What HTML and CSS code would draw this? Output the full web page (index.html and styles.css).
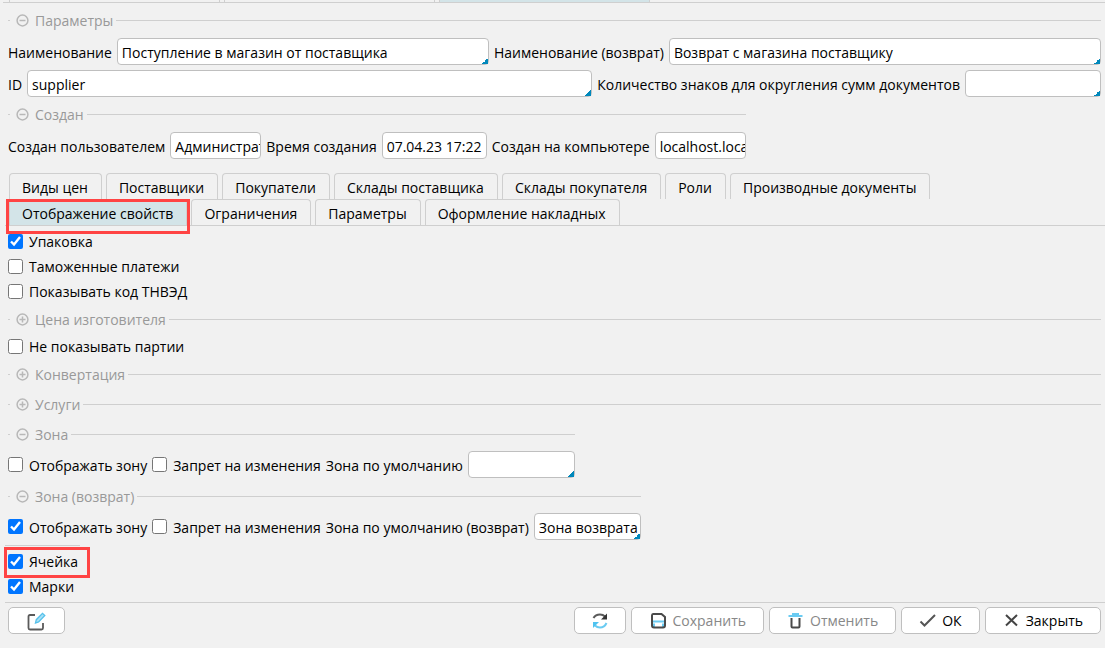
FILE: index.html
```html
<!DOCTYPE html>
<html lang="ru">
<head>
  <meta charset="UTF-8">
  <meta name="viewport" content="width=device-width, initial-scale=1">
  <title>Поступление в магазин от поставщика</title>
  <link rel="stylesheet" href="styles.css">
</head>
<body>

<svg class="defs" width="0" height="0">
  <symbol id="minus" viewBox="0 0 13 13">
    <circle cx="6.5" cy="6.5" r="5.4"/>
    <path d="M3.5 6.5h6"/>
  </symbol>
  <symbol id="plus" viewBox="0 0 13 13">
    <circle cx="6.5" cy="6.5" r="5.4"/>
    <path d="M3.5 6.5h6M6.5 3.5v6"/>
  </symbol>
</svg>

<div class="top-tabs">
  <span></span>
  <span></span>
  <span class="active"></span>
</div>

<main>
  <section class="group">
    <div class="group-title">
      <button type="button"><svg><use href="#minus"/></svg>Параметры</button>
    </div>
    <div class="row">
      <label for="name">Наименование</label>
      <span class="field name"><input type="text" id="name" value="Поступление в магазин от поставщика"></span>
      <label for="nameReturn">Наименование (возврат)</label>
      <span class="field name-return"><input type="text" id="nameReturn" value="Возврат с магазина поставщику"></span>
    </div>
    <div class="row">
      <label for="docId">ID</label>
      <span class="field grow"><input type="text" id="docId" value="supplier"></span>
      <label for="digits">Количество знаков для округления сумм документов</label>
      <span class="field digits"><input type="text" id="digits"></span>
    </div>
  </section>

  <section class="group fit">
    <div class="group-title">
      <button type="button"><svg><use href="#minus"/></svg>Создан</button>
    </div>
    <div class="row">
      <label for="user">Создан пользователем</label>
      <input class="short" type="text" id="user" value="Администратор" readonly>
      <label for="time">Время создания</label>
      <input class="time" type="text" id="time" value="07.04.23 17:22" readonly>
      <label for="host">Создан на компьютере</label>
      <input class="short" type="text" id="host" value="localhost.localdomain" readonly>
    </div>
  </section>

  <nav class="tabs">
    <div class="tab-row">
      <button type="button">Виды цен</button>
      <button type="button">Поставщики</button>
      <button type="button">Покупатели</button>
      <button type="button">Склады поставщика</button>
      <button type="button">Склады покупателя</button>
      <button type="button">Роли</button>
      <button type="button">Производные документы</button>
    </div>
    <div class="tab-row">
      <button type="button" class="active marked">Отображение свойств</button>
      <button type="button">Ограничения</button>
      <button type="button">Параметры</button>
      <button type="button">Оформление накладных</button>
    </div>
  </nav>

  <div class="panel">
    <label class="check"><input type="checkbox" checked>Упаковка</label>
    <label class="check"><input type="checkbox">Таможенные платежи</label>
    <label class="check"><input type="checkbox">Показывать код ТНВЭД</label>

    <section class="group closed">
      <div class="group-title">
        <button type="button"><svg><use href="#plus"/></svg>Цена изготовителя</button>
      </div>
    </section>

    <label class="check"><input type="checkbox">Не показывать партии</label>

    <section class="group closed">
      <div class="group-title">
        <button type="button"><svg><use href="#plus"/></svg>Конвертация</button>
      </div>
    </section>
    <section class="group closed">
      <div class="group-title">
        <button type="button"><svg><use href="#plus"/></svg>Услуги</button>
      </div>
    </section>

    <section class="group fit">
      <div class="group-title">
        <button type="button"><svg><use href="#minus"/></svg>Зона</button>
      </div>
      <div class="row">
        <label class="check"><input type="checkbox">Отображать зону</label>
        <label class="check"><input type="checkbox">Запрет на изменения</label>
        <label for="zone">Зона по умолчанию</label>
        <span class="field zone"><input type="text" id="zone"></span>
      </div>
    </section>

    <section class="group fit">
      <div class="group-title">
        <button type="button"><svg><use href="#minus"/></svg>Зона (возврат)</button>
      </div>
      <div class="row">
        <label class="check"><input type="checkbox" checked>Отображать зону</label>
        <label class="check"><input type="checkbox">Запрет на изменения</label>
        <label for="zoneReturn">Зона по умолчанию (возврат)</label>
        <span class="field zone"><input type="text" id="zoneReturn" value="Зона возврата"></span>
      </div>
    </section>

    <div class="cell">
      <label class="check marked"><input type="checkbox" checked>Ячейка</label>
    </div>
    <label class="check"><input type="checkbox" checked>Марки</label>
  </div>
</main>

<footer>
  <button type="button" class="btn edit" aria-label="Редактировать">
    <svg width="20" height="20" viewBox="0 0 20 20" fill="none">
      <path d="M8 4H3Q1.500 4 1.500 5.500V17q0 1.500 1.500 1.500h11.500q1.500 0 1.500-1.500v-5" stroke="#5a5a5a" stroke-width="1.800"/>
      <path d="M8.500 12l.8-3.300 6.200-6.400 2.300 2.200-6.200 6.400z" fill="#a8e2f7" stroke="#56c0ea" stroke-width="1.300"/>
    </svg>
  </button>
  <button type="button" class="btn refresh" aria-label="Обновить">
    <svg width="18" height="18" viewBox="0 0 18 18" fill="none" stroke-width="2">
      <path d="M2.500 6Q4.500 2.500 9 2.500q3 0 5 2" stroke="#5a5a5a"/>
      <path d="M16 1.500v6h-6z" fill="#333"/>
      <path d="M15.500 11q-2 4.500-6.500 4.500-3 0-5-2" stroke="#6acbf2"/>
      <path d="M2 16v-6h6z" fill="#4fc3f0"/>
    </svg>
  </button>
  <button type="button" class="btn" disabled>
    <svg width="18" height="18" viewBox="0 0 18 18" fill="none" stroke-width="2">
      <path d="M3 9.500h13M5 15.500v-4M14 15.500v-4" stroke="#6acbf2"/>
      <path d="M4 2h8.500L16 5v8.500q0 2-2 2H5q-2 0-2-2v-10Q3 2 4 2z" stroke="#4a4a4a"/>
    </svg>
    Сохранить
  </button>
  <button type="button" class="btn" disabled>
    <svg width="18" height="18" viewBox="0 0 18 18" fill="none" stroke-width="2">
      <path d="M4.500 6v8.500q0 1 1 1h6q1 0 1-1V6" stroke="#4a4a4a"/>
      <path d="M1.500 4h14M6 4V2h5v2" stroke="#6acbf2"/>
    </svg>
    Отменить
  </button>
  <button type="button" class="btn">
    <svg width="18" height="18" viewBox="0 0 18 18" fill="none">
      <path d="M1.500 9.500l4 4L16 3" stroke="#555" stroke-width="2"/>
    </svg>
    ОК
  </button>
  <button type="button" class="btn">
    <svg width="18" height="18" viewBox="0 0 18 18" fill="none">
      <path d="M3 3l11 10.500M14 3L3 13.500" stroke="#444" stroke-width="2"/>
    </svg>
    Закрыть
  </button>
</footer>

</body>
</html>
```

FILE: styles.css
```css
* { margin: 0; padding: 0; box-sizing: border-box; }

body {
  font-family: "Open Sans", "Noto Sans", sans-serif;
  font-size: 14px;
  line-height: 20px;
  background: #f1f1f1;
  color: #000;
}

input, button { font: inherit; color: inherit; }
button { background: none; border: none; cursor: pointer; }
label { white-space: nowrap; }

.defs { position: absolute; }

.top-tabs {
  display: flex;
  gap: 4px;
  height: 3px;
  margin-left: 3px;
  padding-left: 6px;
  border-bottom: 1px solid #cfcfcf;
}

.top-tabs span {
  width: 211px;
  border: 1px solid #cfcfcf;
  border-width: 0 1px;
}

.top-tabs .active { background: #d3e4e8; }

main { padding: 5px 4px 0 8px; }

.group { margin-bottom: 5px; }
.group.fit { width: fit-content; }

.group-title {
  display: flex;
  align-items: center;
  gap: 3px;
  height: 24px;
}

.group-title::before,
.group-title::after {
  content: "";
  height: 1px;
  width: 2px;
  background: #cfcfcf;
}

.group-title::after { flex: 1; }

.group-title button {
  display: flex;
  align-items: center;
  gap: 6px;
  padding: 2px 0 0 3px;
  color: #999;
}

.group-title svg {
  width: 13px;
  height: 13px;
  margin-bottom: 2px;
  fill: none;
  stroke: #b8b8b8;
  stroke-width: 1.5;
}

.row {
  display: flex;
  align-items: center;
  gap: 5px;
  margin-top: 5px;
}

.row > label { padding-top: 2px; }
.row > .check input { margin-bottom: 2px; }

.group-title + .row { margin-top: 6px; }
.panel .group-title + .row { margin-top: 5px; }

input[type="text"] {
  width: 100%;
  height: 27px;
  padding: 2px 0 0 4px;
  background: #fff;
  border: 1px solid #bfbfbf;
  border-radius: 4px;
  outline: none;
}

.row > .short { width: 91px; }
.row > .time { width: 105px; }

.field {
  position: relative;
  display: flex;
}

/* blue corner of an editable field */
.field::after {
  content: "";
  position: absolute;
  right: 1px;
  bottom: 1px;
  width: 6px;
  height: 6px;
  background: linear-gradient(135deg, transparent 50%, #0088bb 50%);
}

.name { flex: 31; }
.name-return { flex: 36; }
.grow { flex: 1; }
.digits { width: 136px; }
.zone { width: 107px; }

.tabs {
  margin: 14px -4px 0 -3px;
  padding-left: 4px;
  border-bottom: 1px solid #cfcfcf;
}

.tab-row { display: flex; gap: 4px; }

.tab-row button {
  position: relative;
  height: 26px;
  padding: 2px 13px 0 12px;
  border: 1px solid #cfcfcf;
  border-bottom: none;
  border-radius: 4px 4px 0 0;
  white-space: nowrap;
}

.tab-row .active { background: #d3e4e8; }

.marked { position: relative; }

.tab-row .marked::after,
.check.marked::after {
  content: "";
  position: absolute;
  inset: -1px -4px -9px -4px;
  border: 3px solid #ff4444;
}

.panel {
  display: flex;
  flex-direction: column;
  align-items: flex-start;
  padding-top: 3px;
}

.panel > .group { margin: 6px 0 0; }
.panel > .group.closed { align-self: stretch; }
.panel > .check + .closed { margin-top: 3px; }
.panel > .closed + .check { margin-top: 3px; }

.check {
  display: flex;
  align-items: center;
  gap: 6px;
  height: 25px;
}

.check input {
  width: 15px;
  height: 15px;
}

.cell {
  margin: 5px 0 0 -3px;
  padding: 3px 2px 0 3px;
  border-top: 1px solid #cfcfcf;
}

.check.marked::after { inset: -2px -12px -4px -4px; }

footer {
  display: flex;
  gap: 5px;
  margin: 3px 0 0 5px;
  padding: 4px 4px 0 3px;
  border-top: 1px solid #cfcfcf;
}

.btn {
  display: flex;
  align-items: center;
  justify-content: center;
  gap: 5px;
  height: 27px;
  padding: 0 17px;
  background: #fff;
  border: 1px solid #bfbfbf;
  border-radius: 5px;
}

.btn:disabled { color: #888; cursor: default; }

.btn.refresh { padding: 0 16px; }
.edit { width: 57px; margin-right: auto; }
```
